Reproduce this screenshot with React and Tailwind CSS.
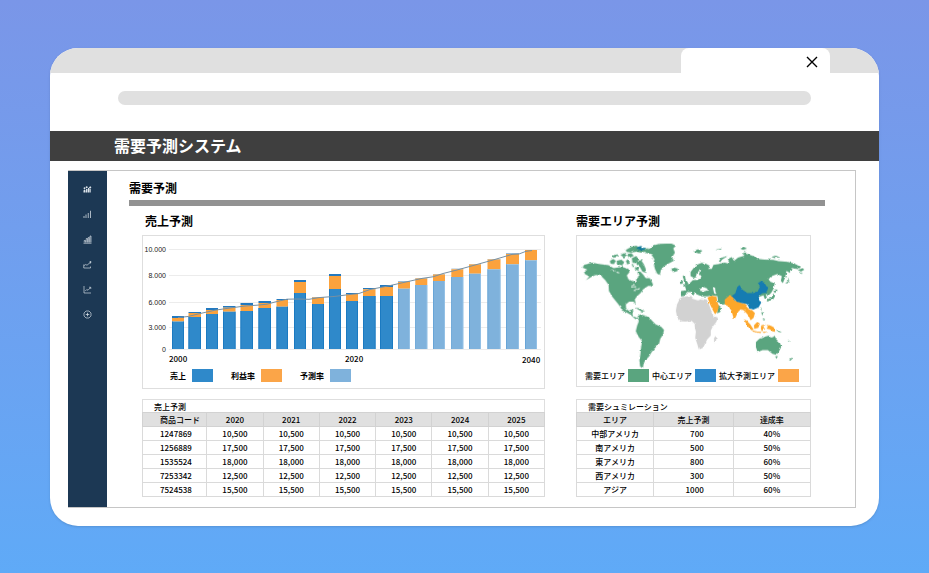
import React from "react";

const YEARS = ["2020", "2021", "2022", "2023", "2024", "2025"];

const SALES = [
  { code: "1247869", value: "10,500" },
  { code: "1256889", value: "17,500" },
  { code: "1535524", value: "18,000" },
  { code: "7253342", value: "12,500" },
  { code: "7524538", value: "15,500" },
];

const SIMULATION = [
  { area: "中部アメリカ", sales: "700", rate: "40%" },
  { area: "南アメリカ", sales: "500", rate: "50%" },
  { area: "東アメリカ", sales: "800", rate: "60%" },
  { area: "西アメリカ", sales: "300", rate: "50%" },
  { area: "アジア", sales: "1000", rate: "60%" },
];

const BASE = 113;

// x, width, top of the cap, top of the profit part, top of the sales part
const BARS = [
  [29, 12, 80, 82, 85.5],
  [45.5, 12.5, 76, 77, 81],
  [63, 12, 72, 74, 78],
  [80, 12.5, 70, 71.7, 75.7],
  [97.5, 12.5, 67, 69, 75],
  [115.5, 12.5, 65, 67, 72],
  [133.5, 11.5, 63, 64, 70.7],
  [151, 12, 44, 46, 57],
  [169, 12, 61, 61.5, 68],
  [186, 12, 38, 40, 53],
  [203, 12, 57, 58, 65],
  [220, 12.5, 52, 53.3, 60],
  [237, 13, 49, 51, 60],
  [255, 12, 45.3, 46, 52.7],
  [272.3, 12, 42, 42.5, 49],
  [290, 12, 38, 38.5, 45],
  [308.3, 12, 32.7, 33.3, 41],
  [326, 12, 28, 28.4, 37.7],
  [344.5, 13, 23, 23.5, 33.3],
  [363, 13, 17.3, 18, 28.3],
  [382, 12, 14, 14, 24.3],
];

const TREND =
  "35,81.5 45,80.5 55,78 72,74.2 87,72 102,70 114,69.2 124,68.2 132,66 144,63.2 154,63 166,63.3 176,61.6 192,60.4 206,58.6 216,57.5 227,53.5 245,50 262,46.2 279,42.4 290,40.8 300,37.5 314,34 332,29 350,24 369,18.4 376,18 383,15.3 389,14.5";

const TICKS = [
  { label: "10.000", y: 13 },
  { label: "8.000", y: 39 },
  { label: "6.000", y: 66 },
  { label: "3.000", y: 91 },
  { label: "0", y: 113 },
];

const NAV = [
  {
    id: "team",
    label: "Team",
    icon: (
      <g fill="currentColor" stroke="none">
        <circle cx="3" cy="6.500" r="1.8" />
        <circle cx="7.4" cy="4.6" r="2" />
        <path d="M1 15v-4l2-2 2 2v4zM6 15V8h3v7zM10 15V6h2.500v9zM13.2 15V7h2.200v8zM11.500 6l2.900-4L17 6z" />
      </g>
    ),
  },
  { id: "signal", label: "Signal", icon: <path d="M2 12V16M6 9v7M10.5 6v10M15 1.500v14.500" strokeWidth="1.5" /> },
  {
    id: "bars",
    label: "Bars",
    icon: <path d="M1 16.500h16M2.500 15v-4H5v4M6.500 15V7H9v8M10.500 15V5H12.500v10M14 15V2h2v13" />,
  },
  {
    id: "growth",
    label: "Growth",
    icon: <path d="M1.500 9v7H15v-3M2 11l3.500-2 2.500 1.500L12 7l3-2M12.500 4H17M15 2v5" />,
  },
  {
    id: "trend",
    label: "Trend",
    icon: <path d="M2 2v14h14M4.500 12l3-3 2.500 1.500L15 5M12 4.500h3.500V8" />,
  },
  {
    id: "add",
    label: "Add",
    icon: (
      <>
        <path d="M6 2h6l4 4v6l-4 4H6l-4-4V6z" />
        <path d="M9 5.500v7M5.500 9h7" strokeWidth="1.5" />
      </>
    ),
  },
];

const Legend = ({ label, color }) => (
  <>
    <span>{label}</span>
    <span className={`h-[13px] w-[21px] ${color}`} />
  </>
);

const SalesChart = () => (
  <svg viewBox="0 0 401 131" className="block w-full" role="img" aria-label="売上予測">
    {TICKS.map((tick) => (
      <g key={tick.label}>
        <line x1="26" x2="398" y1={tick.y + 0.5} y2={tick.y + 0.5} stroke="#ececec" />
        <text x="23" y={tick.y + 3} textAnchor="end" className="fill-[#222] font-['Liberation_Sans',sans-serif] text-[7px]">
          {tick.label}
        </text>
      </g>
    ))}
    {BARS.map(([x, w, cap, profit, sales], i) => {
      const future = i > 12;
      return (
        <g key={x}>
          <rect x={x} y={cap} width={w} height={profit - cap} fill={future ? "#6f9cc4" : "#2379bf"} />
          <rect x={x} y={profit} width={w} height={sales - profit} fill="#fba23d" />
          <rect x={x} y={sales} width={w} height={BASE - sales} fill={future ? "#7fb2dc" : "#2f89ca"} />
          <rect x={x} y={sales} width="0.7" height={BASE - sales} fill={future ? "#5f9fd4" : "#1474bd"} />
          <rect x={x + w - 0.7} y={sales} width="0.7" height={BASE - sales} fill={future ? "#9cc6e8" : "#1474bd"} />
        </g>
      );
    })}
    <polyline points={TREND} fill="none" stroke="#7790a2" strokeWidth="1" />
    <g className="fill-black text-[8px] font-medium">
      <text x="26" y="126">2000</text>
      <text x="202" y="126">2020</text>
      <text x="379" y="127">2040</text>
    </g>
  </svg>
);

const WorldMap = () => (
  <svg viewBox="0 0 702 402" className="block w-full" role="img" aria-label="需要エリア予測">
    <filter id="coast" x="-5%" y="-5%" width="110%" height="110%">
      <feTurbulence type="fractalNoise" baseFrequency="0.08" numOctaves="2" seed="4" result="noise" />
      <feDisplacementMap in="SourceGraphic" in2="noise" scale="8" xChannelSelector="R" yChannelSelector="G" />
    </filter>
    <g filter="url(#coast)" transform="translate(3 3)">
      {/* the Americas and Greenland */}
      <g transform="translate(-18 -78)" fill="#5aa57f">
        <path d="M36 162L60 155 85 160 110 163 125 172 150 168 170 174 173 184 165 194 170 206 184 212 195 216 193 206 200 198 197 182 206 182 215 192 222 202 234 202 241 213 240 222 228 226 214 236 206 247 196 256 189 266 192 281 185 273 172 273 162 281 163 294 171 301 180 296 185 300 181 308 185 317 194 321 200 327 190 325 176 312 160 303 151 300 145 288 135 275 121 258 111 240 110 222 100 208 88 196 72 192 58 198 42 208 52 197 39 190 36 182 46 176 32 170Z" />
        <path d="M218 118L235 112 245 103 262 99 285 98 300 98 313 104 305 112 310 125 302 138 306 150 290 158 275 168 268 178 264 193 256 188 250 175 246 160 248 145 238 130 222 126Z" />
        <path d="M298 174L308 170 319 173 317 181 305 184Z" />
        <path d="M197 318L205 311 218 314 232 320 243 332 252 341 268 348 277 358 274 372 266 384 262 400 250 412 240 424 232 438 222 448 216 458 213 474 205 468 203 450 206 430 208 410 211 392 200 378 192 362 196 345 201 332Z" />
        <path d="M190 291L204 293 216 300 205 300ZM207 301h11v4h-10zM232 216l12 2-2 10-10-4z" />
        <path d="M162 117L178 108 194 104 204 112 214 117 230 111 224 121 208 125 194 122 178 125 164 123Z" />
        <path d="M114 150l10-6 8 6-6 10-10-2zM134 150l14-4 10 8-8 10-14-4zM122 134l12-4 4 8-14 2zM146 132l12-6 8 6-10 8zM162 150l8-6 4 10-7 8zM165 130l14-3 7 8-14 6zM180 142l14-7 6 12-8 10-10-2zM196 150l12-2 8 12 6 14 2 12-12-4-8-14-10-8zM190 168l8 2 4 10-12-4zM180 158l7 3-4 9z" />
        <path d="M198 108l10-3 5 6 10-1-5 7-12 1-12-4z" fill="#147c99" />
        <g fill="none" stroke="#fff" strokeWidth="3">
          <path d="M178 226l9-2 6 6M186 240l8-5M196 236l8-3M118 178l12 2M134 184l8 2" />
        </g>
      </g>
      <g transform="translate(342 -18)">
        {/* Africa */}
        <path
          d="M-32 201L-15 197 0 196 2 204 18 209 30 204 46 207 52 220 60 242 66 255 80 262 74 275 64 288 58 300 58 315 46 328 44 338 34 352 22 357 17 340 11 322 13 303 10 290 9 279 0 271-18 273-32 272-44 258-47 240-44 222-38 210ZM68 322l8-8-2 16-6 8z"
          fill="#d2d2d2"
        />
        {/* Europe, Russia and central Asia */}
        <path
          d="M-32 197L-32 181-16 179-20 165-6 158 4 148 18 147 28 142 30 134 22 132 26 118 20 122 16 138 8 142-3 136-3 124 6 112 16 102 30 96 44 99 56 106 50 114 61 114 66 102 80 100 100 95 114 99 109 85 121 79 128 90 140 80 160 74 150 65 172 70 190 77 196 84 220 86 246 87 262 91 290 93 310 98 327 107 320 115 302 112 296 126 286 120 283 138 275 157 269 150 272 136 258 130 240 137 232 146 238 153 251 158 248 172 240 186 230 196 226 190 200 200 160 210 130 204 110 198 104 220 92 222 80 214 78 196 62 194 48 197 30 197 14 190 12 182 6 195 0 184-14 184-20 196Z"
          fill="#5aa57f"
        />
        <g fill="#5aa57f">
          <path d="M-27 136l7-2 2 12 8 11-3 7-13 0 5-10zM-33 152l6-3 1 9-7 2z" />
          <path d="M5 61l14-6 14 4-10 9-10-3zM72 56l20-2-8 5zM82 92l7-11 20-5-17 10-5 8zM147 53l10-6 10 6-12 4zM158 60l10 2-8 2zM240 78l14-3 12 4-16 3zM320 118l14-6 6 4-10 6zM326 124l10 4-8 1z" />
          <path d="M282 158l10-8-2-12 5 12-6 8zM246 182l8-6 6 3-8 7zM248 188l4 8-6 10-13 5-7 2 4-8 10-4zM216 192l8-2 3 12-6 4zM80 222l12 10-6 12-9 4zM210 244l6 2-3 10zM214 262l8 4-5 4zM206 234l4-4 1 7z" />
          <path d="M194 335L204 325 220 319 233 315 239 321 246 320 250 315 256 327 267 338 270 350 263 364 256 373 244 370 230 359 214 359 199 365 194 350Z" />
          <path d="M252 378l8-1-4 8zM294 388l8-6 3 2-8 7zM254 296l10 4 8 6-10-2zM290 328l6 4-4 1z" />
        </g>
        <path d="M26 174l10-5 10 4 4 5-12 4-12-2zM64 168l7 3 1 12 4 8-8-3-2-10z" fill="#fff" />
        {/* Middle East, south and southeast Asia */}
        <path
          d="M48 201L60 195 75 198 77 210 82 226 78 242 71 251 64 238 56 222ZM100 207L112 196 124 198 132 210 146 215 160 220 170 232 183 239 191 247 187 262 178 269 172 256 164 246 156 238 148 236 140 244 132 262 126 260 120 240 112 228 100 222Z"
          fill="#fda72c"
        />
        <path
          d="M157 266l8 3 12 12 10 16-6 2-12-12zM184 299l14 4 12 1-2 4-24-5zM188 284l10-10 8 5-5 13-12 3zM210 284l14-3-8 6 6 10-6-1-4 8-3-10zM226 283l12 2 10 5 4 14-8-2-8-6-10-2 4-6zM214 304l14-1-10 5z"
          fill="#fda72c"
        />
        {/* China */}
        <path
          d="M121 196L132 188 138 168 145 163 152 176 168 187 186 187 200 180 206 169 200 158 208 152 220 156 225 166 231 170 226 186 214 187 205 193 202 202 210 216 202 230 186 237 174 232 168 221 152 217 136 213Z"
          fill="#127bb2"
        />
      </g>
    </g>
  </svg>
);

const App = () => {
  return (
    <div className="min-h-screen bg-linear-to-b from-[#7a96e8] to-[#5faaf7] px-[50px] py-12 font-['Noto_Sans_CJK_JP',sans-serif] text-black">
      <div className="overflow-hidden rounded-[28px] bg-white shadow-sm">
        <div className="flex h-[25px] justify-end bg-[#e0e0e0] pr-[49px]">
          <div className="flex w-[149px] items-center justify-end rounded-t-lg bg-white pr-3">
            <button type="button" aria-label="閉じる" className="pt-[2px]">
              <svg viewBox="0 0 12 12" className="h-3 w-3" fill="none" stroke="#000" strokeWidth="1.4">
                <path d="M1 1l10 10M11 1L1 11" />
              </svg>
            </button>
          </div>
        </div>
        <div className="flex h-[58px] items-start px-[68px] pt-[18px]">
          <input type="text" aria-label="アドレス" className="h-[14px] w-full rounded-full bg-[#e0e0e0] px-3 text-[8px] outline-none" />
        </div>
        <header className="h-[30px] bg-[#3f3f3f] pt-[2px] pl-[64px]">
          <h1 className="text-[16px] leading-[24px] font-bold text-white">需要予測システム</h1>
        </header>

        <div className="pt-[9px] pr-[23px] pb-[18px] pl-[18px]">
          <div className="flex border border-l-0 border-[#c6c6c6]">
            <nav className="flex w-[39px] shrink-0 flex-col items-center bg-[#1c3854] pt-[6px]">
              {NAV.map((item) => (
                <button key={item.id} type="button" aria-label={item.label} className="flex h-[25px] items-center text-[#dbe3ea]">
                  <svg viewBox="0 0 18 18" className="h-[9px] w-[9px]" fill="none" stroke="currentColor" strokeWidth="1.3">
                    {item.icon}
                  </svg>
                </button>
              ))}
            </nav>

            <main className="min-w-0 flex-1 pt-2 pb-[10px] pl-[22px]">
              <h2 className="text-[12px] leading-[18px] font-bold">需要予測</h2>
              <div className="mt-[3px] mr-[30px] h-[6px] bg-[#929292]" />

              <div className="mr-[44px] ml-[13px] grid grid-cols-[403fr_235fr] gap-x-[31px] pt-[6px]">
                <section>
                  <h3 className="pl-[3px] text-[12px] leading-[18px] font-bold">売上予測</h3>
                  <div className="mt-[5px] border border-[#dedede] pb-[6px]">
                    <SalesChart />
                    <div className="flex items-center gap-[6px] pt-[2px] pl-[27px] text-[8px] leading-[13px] font-bold">
                      <Legend label="売上" color="mr-3 bg-[#2f89ca]" />
                      <Legend label="利益率" color="mr-3 bg-[#fba548]" />
                      <Legend label="予測率" color="bg-[#7fb2dc]" />
                    </div>
                  </div>
                </section>

                <section>
                  <h3 className="text-[12px] leading-[18px] font-bold">需要エリア予測</h3>
                  <div className="mt-[5px] border border-[#dedede] pb-1">
                    <WorldMap />
                    <div className="flex items-center gap-[3px] pl-2 text-[8px] leading-[13px] font-medium whitespace-nowrap">
                      <Legend label="需要エリア" color="bg-[#5aa57f]" />
                      <Legend label="中心エリア" color="bg-[#2f89ca]" />
                      <Legend label="拡大予測エリア" color="bg-[#fba548]" />
                    </div>
                  </div>
                </section>

                <table className="mt-[10px] w-full table-fixed border-collapse text-center text-[8px] leading-[12px] font-medium">
                  <caption className="h-[13px] border border-b-0 border-[#dedede] pl-[11px] text-left leading-[13px]">売上予測</caption>
                  <thead>
                    <tr className="h-[14px] bg-[#e0e0e0]">
                      <th className="w-[16%] border border-[#d2d2d2] p-0 pl-[17px] text-left font-medium">商品コード</th>
                      {YEARS.map((year) => (
                        <th key={year} className="border border-[#d2d2d2] p-0 font-medium">{year}</th>
                      ))}
                    </tr>
                  </thead>
                  <tbody>
                    {SALES.map((row) => (
                      <tr key={row.code} className="h-[14px]">
                        <td className="border border-[#dadada] p-0 pl-[17px] text-left">{row.code}</td>
                        {YEARS.map((year) => (
                          <td key={year} className="border border-[#dadada] p-0">{row.value}</td>
                        ))}
                      </tr>
                    ))}
                  </tbody>
                </table>

                <table className="mt-[10px] w-full table-fixed border-collapse text-center text-[8px] leading-[12px] font-medium">
                  <caption className="h-[13px] border border-b-0 border-[#dedede] pl-[11px] text-left leading-[13px]">需要シュミレーション</caption>
                  <thead>
                    <tr className="h-[14px] bg-[#e0e0e0]">
                      <th className="border border-[#d2d2d2] p-0 font-medium">エリア</th>
                      <th className="w-[34%] border border-[#d2d2d2] p-0 font-medium">売上予測</th>
                      <th className="border border-[#d2d2d2] p-0 font-medium">達成率</th>
                    </tr>
                  </thead>
                  <tbody>
                    {SIMULATION.map((row) => (
                      <tr key={row.area} className="h-[14px]">
                        <td className="border border-[#dadada] p-0">{row.area}</td>
                        <td className="border border-[#dadada] p-0 pr-[29px] text-right">{row.sales}</td>
                        <td className="border border-[#dadada] p-0">{row.rate}</td>
                      </tr>
                    ))}
                  </tbody>
                </table>
              </div>
            </main>
          </div>
        </div>
      </div>
    </div>
  );
};

export default App;
